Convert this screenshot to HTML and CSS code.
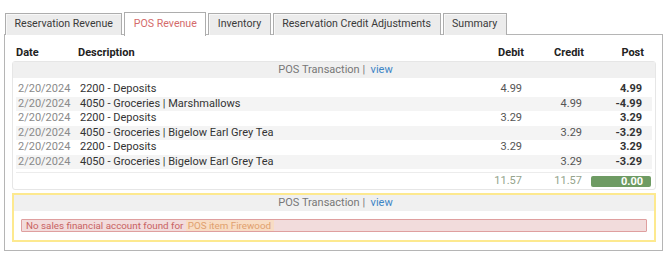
FILE: index.html
```html
<!DOCTYPE html>
<html>
<head>
<meta charset="utf-8">
<link rel="stylesheet" href="styles.css">
</head>
<body>
<div class="tabs">
  <div class="tab">Reservation Revenue</div>
  <div class="tab active">POS Revenue</div>
  <div class="tab">Inventory</div>
  <div class="tab">Reservation Credit Adjustments</div>
  <div class="tab">Summary</div>
</div>
<div class="panel">
  <div class="head">
    <div>Date</div><div>Description</div><div class="num">Debit</div><div class="num">Credit</div><div class="num">Post</div>
  </div>
  <div class="group">
    <div class="ghead">POS Transaction |&nbsp; <a class="view">view</a></div>
    <div class="rows">
      <div class="row"><div class="date">2/20/2024</div><div class="desc">2200 - Deposits</div><div class="num">4.99</div><div class="num"></div><div class="num post">4.99</div></div>
      <div class="row alt"><div class="date">2/20/2024</div><div class="desc">4050 - Groceries | Marshmallows</div><div class="num"></div><div class="num">4.99</div><div class="num post">-4.99</div></div>
      <div class="row"><div class="date">2/20/2024</div><div class="desc">2200 - Deposits</div><div class="num">3.29</div><div class="num"></div><div class="num post">3.29</div></div>
      <div class="row alt"><div class="date">2/20/2024</div><div class="desc">4050 - Groceries | Bigelow Earl Grey Tea</div><div class="num"></div><div class="num">3.29</div><div class="num post">-3.29</div></div>
      <div class="row"><div class="date">2/20/2024</div><div class="desc">2200 - Deposits</div><div class="num">3.29</div><div class="num"></div><div class="num post">3.29</div></div>
      <div class="row alt"><div class="date">2/20/2024</div><div class="desc">4050 - Groceries | Bigelow Earl Grey Tea</div><div class="num"></div><div class="num">3.29</div><div class="num post">-3.29</div></div>
      <div class="row total"><div></div><div></div><div class="num">11.57</div><div class="num">11.57</div><div class="num"><span class="badge">0.00</span></div></div>
    </div>
  </div>
  <div class="group warn">
    <div class="ghead">POS Transaction |&nbsp; <a class="view">view</a></div>
    <div class="errwrap">
      <div class="error">No sales financial account found for <span class="hl">POS item Firewood</span></div>
    </div>
  </div>
</div>
</body>
</html>
```
FILE: styles.css
```css
* { box-sizing: border-box; }
body {
  margin: 0;
  padding: 12px 7px 0 4px;
  font-family: Roboto, "Liberation Sans", sans-serif;
  font-size: 11px;
  color: #333;
  background: #fff;
}
.tabs {
  display: flex;
  align-items: flex-end;
  gap: 2px;
  padding-left: 1px;
  height: 23px;
  position: relative;
  z-index: 1;
}
.tab {
  height: 22px;
  line-height: 20px;
  padding: 0 8.5px;
  border: 1px solid #adadad;
  border-bottom: none;
  background: #ececec;
  color: #3a3a3a;
  font-size: 10.6px;
  white-space: nowrap;
  box-shadow: inset 1px 1px 0 #f8f8f8;
}
.tab.active {
  height: 24px;
  margin-bottom: -1px;
  line-height: 22px;
  background: #fff;
  color: #d46b6b;
  box-shadow: none;
}
.panel {
  border: 1px solid #b5b5b5;
  padding: 9px 6px 8px 7px;
  margin-top: -1px;
}
.head {
  display: grid;
  grid-template-columns: 62px 1fr 60px 60px 60px;
  height: 17px;
  line-height: 17px;
  padding: 0 10px 0 2px;
  margin: 0 2px;
  font-weight: bold;
  color: #222;
}
.num { text-align: right; }
.group {
  border: 1px solid #e6e6e6;
  border-radius: 3px;
}
.ghead {
  height: 16px;
  line-height: 16px;
  background: #f0f0f0;
  text-align: center;
  color: #777;
  padding-left: 3px;
}
.view { color: #3d85c6; }
.rows { padding: 4px 3px 0 3px; }
.row {
  display: grid;
  grid-template-columns: 62px 1fr 60px 60px 60px;
  height: 14.5px;
  line-height: 14.5px;
  padding: 0 10px 0 2px;
  color: #555;
}
.row.alt { background: #f4f4f4; }
.date { color: #8a8a8a; }
.desc { color: #333; }
.post { font-weight: bold; color: #333; }
.row.total {
  margin-top: 3px;
  border-top: 1px solid #ececec;
  height: 17px;
  align-items: center;
  color: #94a38c;
}
.badge {
  display: block;
  height: 11px;
  line-height: 11px;
  width: 60px;
  margin-left: auto;
  margin-right: -9px;
  padding-right: 8px;
  background: #6e9b63;
  color: #fff;
  font-weight: bold;
  border-radius: 2px;
  text-align: right;
}
.group.warn {
  margin-top: 3px;
  border: 2px solid #fde98f;
  border-radius: 0;
}
.errwrap { padding: 8px 7px 8px 7px; }
.error {
  height: 13px;
  line-height: 11px;
  border: 1px solid #df9f9f;
  background: #f2dcdc;
  color: #c86262;
  font-size: 9.8px;
  padding-left: 4px;
  border-radius: 1px;
}
.hl {
  background: #f8dcc4;
  color: #e0a06e;
  padding: 0 3px 0 2px;
}
```
